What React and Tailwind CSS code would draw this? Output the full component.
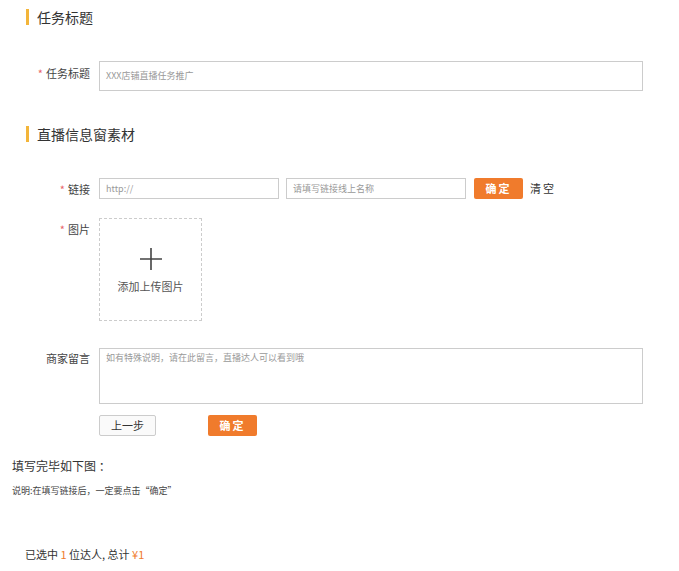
import React from 'react';

const font = { fontFamily: '"Noto Sans CJK SC", "Noto Sans", sans-serif' };

function SectionTitle({ children, className }) {
  return (
    <div className={`flex items-center pl-[26px] h-[16px] ${className}`}>
      <span className="w-[3px] h-[16px] bg-[#f3b53a]" />
      <span className="ml-[8px] text-[14px] leading-[16px] text-[#333]">{children}</span>
    </div>
  );
}

function Label({ required, children, className = '' }) {
  return (
    <div className={`w-[90px] shrink-0 text-right text-[11px] leading-[14px] text-[#444] ${className}`}>
      {required && <span className="text-[#e8656a] text-[11px] mr-[3px]">*</span>}
      {children}
    </div>
  );
}

export default function App() {
  return (
    <div className="w-[679px] h-[571px] bg-white overflow-hidden flex flex-col" style={font}>
      <SectionTitle className="mt-[9px]">任务标题</SectionTitle>

      <div className="flex mt-[36px]">
        <Label required className="pt-[5px]">任务标题</Label>
        <div className="ml-[9px] w-[544px] h-[30px] border border-[#ccc] flex items-center pl-[6px] text-[9px] text-[#999]">
          XXX店铺直播任务推广
        </div>
      </div>

      <SectionTitle className="mt-[35px]">直播信息窗素材</SectionTitle>

      <div className="flex items-center mt-[36px] h-[21px]">
        <Label required>链接</Label>
        <div className="ml-[9px] w-[180px] h-[21px] border border-[#ccc] flex items-center pl-[6px] text-[9px] text-[#999]">
          http://
        </div>
        <div className="ml-[7px] w-[180px] h-[21px] border border-[#ccc] flex items-center pl-[6px] text-[9px] text-[#999]">
          请填写链接线上名称
        </div>
        <button className="ml-[8px] w-[49px] h-[21px] bg-[#f07b2c] rounded-[2px] text-white text-[11px] font-bold tracking-[2px] flex items-center justify-center">
          确定
        </button>
        <span className="ml-[7px] text-[11px] text-[#333] tracking-[2px]">清空</span>
      </div>

      <div className="flex mt-[19px]">
        <Label required className="pt-[4px]">图片</Label>
        <div className="ml-[9px] w-[103px] h-[103px] border border-dashed border-[#ccc] flex flex-col items-center">
          <svg width="22" height="22" viewBox="0 0 22 22" className="mt-[29px]">
            <path d="M11 0V22M0 11H22" stroke="#444" strokeWidth="1.6" />
          </svg>
          <span className="mt-[9px] text-[11px] leading-[14px] text-[#555]">添加上传图片</span>
        </div>
      </div>

      <div className="flex mt-[27px]">
        <Label className="pt-[3px]">商家留言</Label>
        <div className="ml-[9px] w-[544px] h-[56px] border border-[#ccc] pl-[6px] pt-[3px] text-[9px] leading-[12px] text-[#999]">
          如有特殊说明，请在此留言，直播达人可以看到哦
        </div>
      </div>

      <div className="flex mt-[11px] ml-[99px]">
        <button className="w-[57px] h-[21px] border border-[#ccc] rounded-[2px] bg-[#fafafa] text-[11px] text-[#333]">
          上一步
        </button>
        <button className="ml-[52px] w-[49px] h-[21px] bg-[#f07b2c] rounded-[2px] text-white text-[11px] font-bold tracking-[2px] flex items-center justify-center">
          确定
        </button>
      </div>

      <div className="mt-[22px] pl-[12px] text-[12px] leading-[16px] text-[#333]">填写完毕如下图 ：</div>
      <div className="mt-[10px] pl-[12px] text-[9px] leading-[14px] text-[#444]">说明:在填写链接后，一定要点击“确定”</div>

      <div className="mt-[49px] pl-[25px] text-[11px] leading-[14px] text-[#333]">
        已选中 <span className="text-[#f07b2c]">1</span> 位达人, 总计 <span className="text-[#f07b2c]">¥1</span>
      </div>
    </div>
  );
}
